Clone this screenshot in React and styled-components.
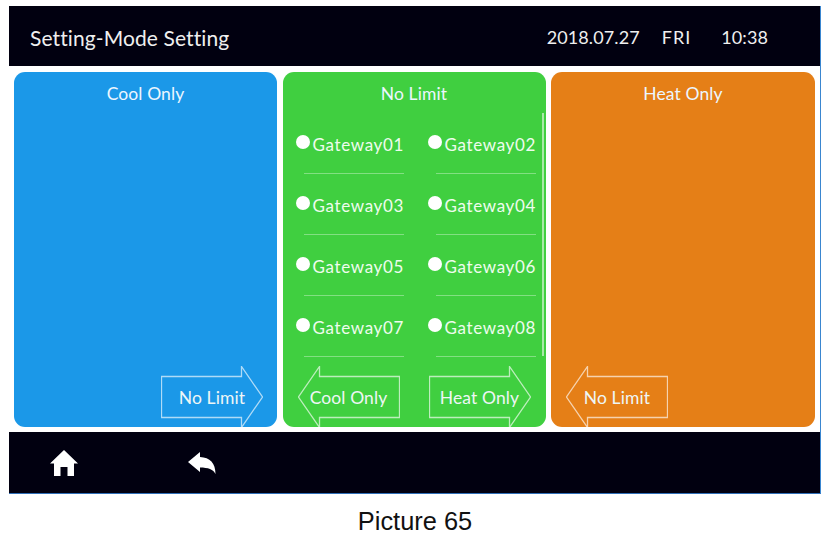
import React from 'react'
import styled, { createGlobalStyle } from 'styled-components'

const GlobalStyle = createGlobalStyle`
    html, body {
        margin: 0;
        padding: 0;
        background: #ffffff;
    }
    * {
        box-sizing: border-box;
    }
`

const Page = styled.div`
    width: 839px;
    height: 544px;
    padding: 6px 18px 0 9px;
    overflow: hidden;
    background: #ffffff;
    font-family: "Lato", "Liberation Sans", sans-serif;
`

const Screen = styled.div`
    width: 812px;
    height: 488px;
    display: flex;
    flex-direction: column;
    border-right: 1px solid #3a86d0;
    border-bottom: 1px solid #2f6fb8;
`

const Header = styled.header`
    height: 60px;
    flex: none;
    display: flex;
    align-items: center;
    justify-content: space-between;
    padding: 2px 52px 0 21px;
    background: #010010;
    color: #efefef;
`

const Title = styled.h1`
    margin: 0;
    font-size: 21px;
    font-weight: 400;
    letter-spacing: 0.1px;
`

const Clock = styled.div`
    display: flex;
    gap: 30px;
    font-size: 18px;
    letter-spacing: 0.1px;
`

const Day = styled.span`
    margin-left: -8px;
    letter-spacing: 1px;
`

const Panels = styled.main`
    flex: 1;
    min-height: 0;
    display: grid;
    grid-template-columns: 263px 263px 264px;
    justify-content: space-between;
    padding: 6px 5px 5px;
    background: #ffffff;
`

const Panel = styled.section`
    position: relative;
    display: flex;
    flex-direction: column;
    border-radius: 11px;
    overflow: hidden;
    background: ${(props) => props.$color};
`

const PanelTitle = styled.div`
    height: 43px;
    flex: none;
    display: flex;
    align-items: center;
    justify-content: center;
    color: #ecf6ff;
    font-size: 17.5px;
    letter-spacing: 0.1px;
`

const GatewayGrid = styled.div`
    flex: 1;
    display: grid;
    grid-template-columns: 122px 110px;
    grid-auto-rows: 61px;
    column-gap: 10px;
    align-content: start;
    margin-top: -2px;
    padding-left: 13px;
`

const Gateway = styled.div`
    position: relative;
    display: flex;
    align-items: flex-start;
    gap: 3px;
    padding-top: 21px;
    color: #eefcee;
    font-size: 17px;
    line-height: 21px;
    letter-spacing: 0.65px;

    &::after {
        content: '';
        position: absolute;
        left: 8px;
        width: 100px;
        bottom: 0;
        height: 1px;
        background: rgba(255, 255, 255, 0.35);
    }
`

const Dot = styled.span`
    width: 14px;
    height: 14px;
    flex: none;
    margin-top: 1px;
    border-radius: 50%;
    background: #ffffff;
`

const Scrollbar = styled.div`
    position: absolute;
    top: 41px;
    right: 2px;
    width: 2px;
    height: 243px;
    background: rgba(255, 255, 255, 0.55);
`

const Actions = styled.div`
    height: 61px;
    flex: none;
    margin-top: auto;
    display: flex;
    align-items: flex-start;
    justify-content: ${(props) => props.$justify};
    padding: ${(props) => props.$padding};
`

const ArrowWrap = styled.button`
    width: 102px;
    height: 62px;
    padding: 0;
    border: 0;
    background: none;
    display: grid;
    color: inherit;
    font: inherit;

    & > * {
        grid-area: 1 / 1;
    }
`

const ArrowSvg = styled.svg`
    width: 102px;
    height: 62px;
    display: block;
    transform: ${(props) => (props.$left ? 'scaleX(-1)' : 'none')};
`

const ArrowLabel = styled.span`
    align-self: center;
    justify-self: center;
    color: #eef6f6;
    font-size: 17.5px;
    letter-spacing: 0.1px;
    white-space: nowrap;
`

const Footer = styled.footer`
    height: 61px;
    flex: none;
    display: flex;
    align-items: center;
    gap: 110px;
    padding: 0 0 0 41px;
    background: #010010;
`

const IconSvg = styled.svg`
    width: 28px;
    height: 28px;
    display: block;
    fill: #ffffff;
`

const Caption = styled.div`
    margin-top: 13px;
    width: 812px;
    text-align: center;
    font-family: "Liberation Sans", Arial, sans-serif;
    font-size: 25.4px;
    line-height: 29px;
    color: #111111;
`

const ArrowButton = ({ label, left }) => (
    <ArrowWrap>
        <ArrowSvg $left={left} viewBox="0 0 102 62" fill="none">
            <path
                d="M0.5 10.5 H80.5 V0.5 L101.5 31 L80.5 61.5 V51.5 H0.5 Z"
                stroke="rgba(255,255,255,0.65)"
                strokeWidth="1.3"
            />
        </ArrowSvg>
        <ArrowLabel>{label}</ArrowLabel>
    </ArrowWrap>
)

const gateways = ['01', '02', '03', '04', '05', '06', '07', '08']

export default function App() {
    return (
        <Page>
            <GlobalStyle />
            <Screen>
                <Header>
                    <Title>Setting-Mode Setting</Title>
                    <Clock>
                        <span>2018.07.27</span>
                        <Day>FRI</Day>
                        <span>10:38</span>
                    </Clock>
                </Header>
                <Panels>
                    <Panel $color="#1b98e8">
                        <PanelTitle>Cool Only</PanelTitle>
                        <Actions $justify="flex-end" $padding="0 14px 0 0">
                            <ArrowButton label="No Limit" />
                        </Actions>
                    </Panel>
                    <Panel $color="#40cf40">
                        <PanelTitle>No Limit</PanelTitle>
                        <GatewayGrid>
                            {gateways.map((id) => (
                                <Gateway key={id}>
                                    <Dot />
                                    Gateway{id}
                                </Gateway>
                            ))}
                        </GatewayGrid>
                        <Scrollbar />
                        <Actions $justify="space-between" $padding="0 15px">
                            <ArrowButton left label="Cool Only" />
                            <ArrowButton label="Heat Only" />
                        </Actions>
                    </Panel>
                    <Panel $color="#e57f17">
                        <PanelTitle>Heat Only</PanelTitle>
                        <Actions $justify="flex-start" $padding="0 0 0 15px">
                            <ArrowButton left label="No Limit" />
                        </Actions>
                    </Panel>
                </Panels>
                <Footer>
                    <IconSvg viewBox="0 0 28 28">
                        <path d="M14 1 L28 14.5 L24 14.5 V27 H17.5 V18 H10.5 V27 H4 V14.5 H0 Z" />
                    </IconSvg>
                    <IconSvg viewBox="0 0 28 28">
                        <path d="M0 13 L12 3 V8 C22 8.5 27.5 14 27.5 25 C25.5 20.5 20 18.5 12 18.5 V23 Z" />
                    </IconSvg>
                </Footer>
            </Screen>
            <Caption>Picture 65</Caption>
        </Page>
    )
}
